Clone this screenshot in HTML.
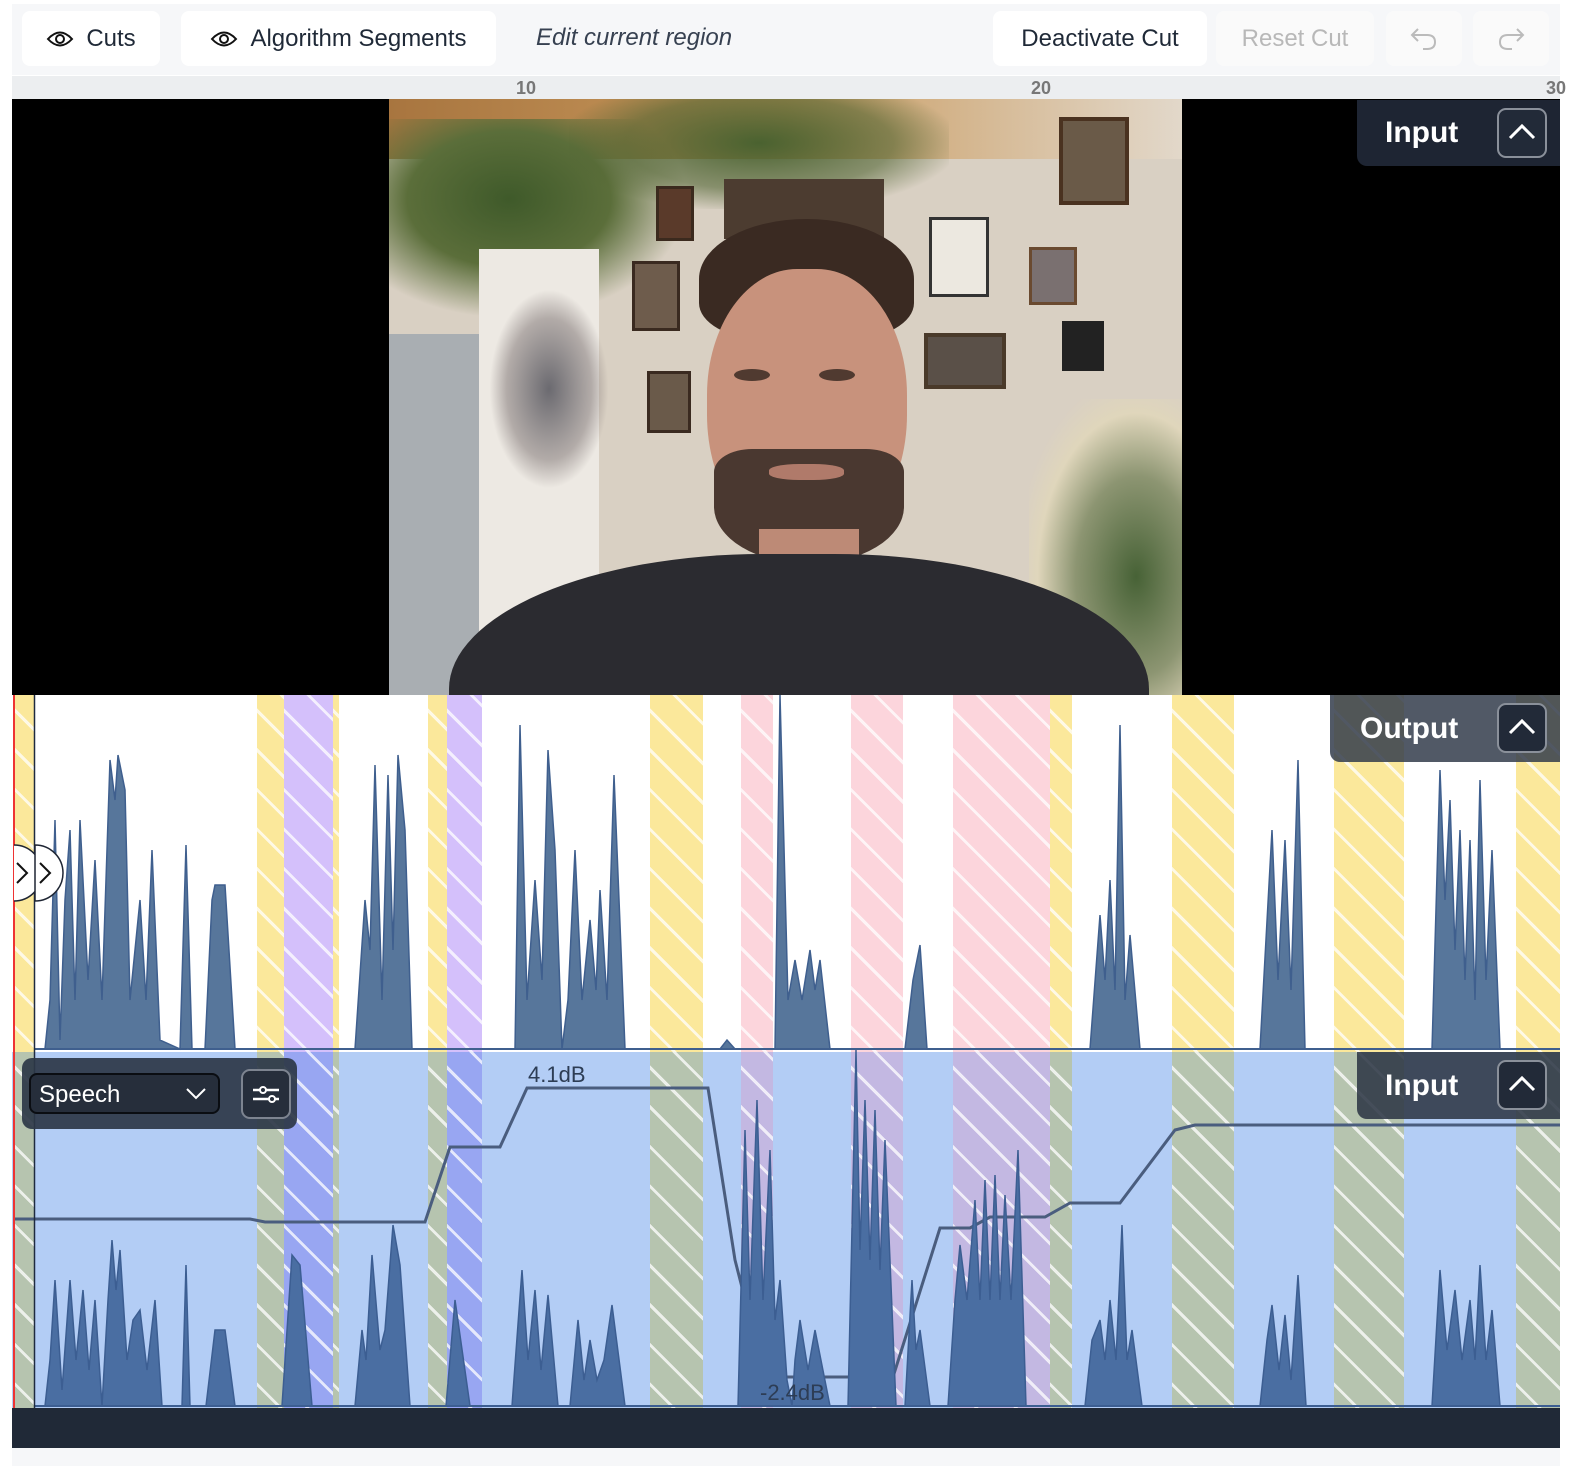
<!DOCTYPE html>
<html><head><meta charset="utf-8"><style>
*{margin:0;padding:0;box-sizing:border-box}
html{overflow:hidden;width:1580px;height:1466px}
body{width:1580px;height:1466px;background:#fff;position:relative;overflow:hidden;font-family:"Liberation Sans",sans-serif}
svg{display:block}
.abs{position:absolute}
.btn{position:absolute;top:11px;height:55px;background:#fff;border-radius:8px;font-size:24px;color:#1f2937;display:flex;align-items:center;justify-content:center;gap:12px}
.band{position:absolute;top:0;bottom:0}
.st{background-image:repeating-linear-gradient(45deg,rgba(255,255,255,0) 0 16px,rgba(255,255,255,.75) 16px 19px,rgba(255,255,255,0) 19px 28px)}
.lab{position:absolute;color:#fff;font-weight:bold;font-size:30px;display:flex;align-items:center}
.up{position:absolute;width:50px;height:50px;border:2px solid #8a909a;border-radius:9px;background:#222a38}
</style></head><body>
<div class="abs" style="left:12px;top:4px;width:1548px;height:71px;background:#f6f7f9"></div>
<div class="btn" style="left:22px;width:138px"><svg width="28" height="20" viewBox="0 0 28 20"><path d="M2 10 Q14 -3 26 10 Q14 23 2 10Z" fill="none" stroke="#111" stroke-width="2"/><circle cx="14" cy="10" r="4" fill="none" stroke="#111" stroke-width="2"/></svg>Cuts</div>
<div class="btn" style="left:181px;width:315px"><svg width="28" height="20" viewBox="0 0 28 20"><path d="M2 10 Q14 -3 26 10 Q14 23 2 10Z" fill="none" stroke="#111" stroke-width="2"/><circle cx="14" cy="10" r="4" fill="none" stroke="#111" stroke-width="2"/></svg>Algorithm Segments</div>
<div class="abs" style="left:536px;top:24px;font-size:24px;font-style:italic;color:#374151">Edit current region</div>
<div class="btn" style="left:993px;width:214px">Deactivate Cut</div>
<div class="btn" style="left:1216px;width:158px;background:#fafafa;color:#b8b8b8">Reset Cut</div>
<div class="btn" style="left:1386px;width:76px;background:#fafafa"><svg width="30" height="28" viewBox="0 0 30 28"><path d="M9 4 L3 10 L9 16 M3 10 H18 Q26 10 26 17 Q26 24 18 24 H14" fill="none" stroke="#bbb" stroke-width="2"/></svg></div>
<div class="btn" style="left:1473px;width:76px;background:#fafafa"><svg width="30" height="28" viewBox="0 0 30 28"><path d="M21 4 L27 10 L21 16 M27 10 H12 Q4 10 4 17 Q4 24 12 24 H16" fill="none" stroke="#bbb" stroke-width="2"/></svg></div>
<div class="abs" style="left:12px;top:76px;width:1548px;height:23px;background:#eceef0;font-size:18px;font-weight:bold;color:#777"><span class="abs" style="left:504px;top:2px">10</span><span class="abs" style="left:1019px;top:2px">20</span><span class="abs" style="left:1534px;top:2px">30</span></div>
<div class="abs" style="left:12px;top:99px;width:1548px;height:596px;background:#000"></div>
<div class="abs" style="left:389px;top:99px;width:793px;height:596px;overflow:hidden;background:#d9d0c3">
 <div class="abs" style="left:0;top:0;width:793px;height:60px;background:linear-gradient(90deg,#a8753f,#c99a5e 50%,#e2d8ca)"></div>
 <div class="abs" style="left:0;top:20px;width:300px;height:200px;background:radial-gradient(ellipse at 40% 40%,#3f5a2a 0,#5b6e3a 40%,rgba(90,110,60,0) 70%)"></div>
 <div class="abs" style="left:180px;top:0;width:380px;height:110px;background:radial-gradient(ellipse at 50% 40%,#4a6230 0,rgba(80,100,50,.6) 50%,rgba(0,0,0,0) 75%)"></div>
 <div class="abs" style="left:0;top:235px;width:90px;height:361px;background:#a9aeb2"></div>
 <div class="abs" style="left:90px;top:150px;width:120px;height:446px;background:#ede9e3"></div>
 <div class="abs" style="left:100px;top:190px;width:120px;height:200px;background:radial-gradient(ellipse,#6b6a70 0,rgba(120,110,110,.5) 50%,rgba(0,0,0,0) 70%)"></div>
 <div class="abs" style="left:267px;top:87px;width:38px;height:55px;background:#5a3a2a;border:3px solid #3b2a1e"></div>
 <div class="abs" style="left:243px;top:162px;width:48px;height:70px;background:#6e5c4c;border:3px solid #3a2a20"></div>
 <div class="abs" style="left:258px;top:272px;width:44px;height:62px;background:#6a5a4a;border:3px solid #3a2a20"></div>
 <div class="abs" style="left:335px;top:80px;width:160px;height:60px;background:#4c3c30"></div>
 <div class="abs" style="left:540px;top:118px;width:60px;height:80px;background:#ece8e0;border:3px solid #333"></div>
 <div class="abs" style="left:670px;top:18px;width:70px;height:88px;background:#6a5a48;border:4px solid #4a3220"></div>
 <div class="abs" style="left:640px;top:148px;width:48px;height:58px;background:#7a7070;border:3px solid #6a4a30"></div>
 <div class="abs" style="left:535px;top:234px;width:82px;height:56px;background:#5a5048;border:4px solid #4a3a2a"></div>
 <div class="abs" style="left:673px;top:222px;width:42px;height:50px;background:#222"></div>
 <div class="abs" style="left:640px;top:300px;width:153px;height:296px;background:radial-gradient(ellipse at 70% 60%,#476236 0,rgba(90,110,60,.6) 40%,rgba(230,220,180,.5) 65%,rgba(0,0,0,0) 80%)"></div>
 <div class="abs" style="left:310px;top:120px;width:215px;height:120px;border-radius:50% 50% 30% 30%;background:#3a2a22"></div>
 <div class="abs" style="left:318px;top:170px;width:200px;height:280px;border-radius:45% 45% 48% 48%;background:#c8927c"></div>
 <div class="abs" style="left:325px;top:350px;width:190px;height:115px;border-radius:20% 20% 50% 50%;background:#4a3830"></div>
 <div class="abs" style="left:380px;top:365px;width:75px;height:16px;border-radius:40%;background:#b07a6a"></div>
 <div class="abs" style="left:345px;top:270px;width:36px;height:12px;border-radius:50%;background:#503a30"></div>
 <div class="abs" style="left:430px;top:270px;width:36px;height:12px;border-radius:50%;background:#503a30"></div>
 <div class="abs" style="left:370px;top:430px;width:100px;height:60px;background:#bd8a76"></div>
 <div class="abs" style="left:60px;top:455px;width:700px;height:300px;border-radius:45% 45% 0 0;background:#2b2b30"></div>
</div>
<div class="lab" style="left:1357px;top:100px;width:203px;height:66px;background:#1e2533;border-radius:0 0 0 10px;padding-left:28px">Input</div>
<div class="up" style="left:1497px;top:108px"><svg width="46" height="46" viewBox="0 0 46 46"><path d="M11 28 L23 16 L35 28" fill="none" stroke="#fff" stroke-width="3"/></svg></div>

<div class="abs" style="left:12px;top:695px;width:1548px;height:357px;background:#fff;overflow:hidden">
 <div class="band st" style="left:3px;width:19px;background-color:#fbe89b"></div>
 <div class="band st" style="left:245px;width:27px;background-color:#fbe89b"></div>
 <div class="band st" style="left:272px;width:49px;background-color:#d4c0fb"></div>
 <div class="band st" style="left:321px;width:6px;background-color:#fbe89b"></div>
 <div class="band st" style="left:416px;width:19px;background-color:#fbe89b"></div>
 <div class="band st" style="left:435px;width:35px;background-color:#d4c0fb"></div>
 <div class="band st" style="left:638px;width:53px;background-color:#fbe89b"></div>
 <div class="band st" style="left:729px;width:32px;background-color:#fcd5dc"></div>
 <div class="band st" style="left:839px;width:52px;background-color:#fcd5dc"></div>
 <div class="band st" style="left:941px;width:97px;background-color:#fcd5dc"></div>
 <div class="band st" style="left:1038px;width:22px;background-color:#fbe89b"></div>
 <div class="band st" style="left:1160px;width:62px;background-color:#fbe89b"></div>
 <div class="band st" style="left:1322px;width:70px;background-color:#fbe89b"></div>
 <div class="band st" style="left:1504px;width:44px;background-color:#fbe89b"></div>
</div>
<svg class="abs" style="left:0;top:0" width="1580" height="1466">
 <polygon fill="#57769b" stroke="#3f5f8e" stroke-width="1.5" points="34,1049 45,1049 50,1000 55,820 60,1040 65,900 70,830 75,1000 80,820 88,980 95,860 102,1000 110,760 115,800 118,755 125,790 130,1000 140,900 146,1000 152,850 160,1040 180,1049 186,845 192,1049 205,1049 212,900 215,885 225,885 235,1049 355,1049 365,900 370,950 375,765 382,1000 388,775 393,950 398,755 405,830 412,1049 515,1049 520,725 527,1000 535,880 542,980 548,750 555,850 562,1049 568,1000 575,850 582,1000 590,920 596,990 600,890 607,1000 614,775 625,1049 720,1049 727,1040 735,1049 775,1049 780,695 788,1000 795,960 802,1000 810,950 815,990 820,960 830,1049 905,1049 913,980 920,945 927,1049 1090,1049 1100,915 1105,980 1110,880 1115,990 1120,725 1125,1000 1130,935 1140,1049 1260,1049 1272,830 1278,980 1285,840 1291,990 1298,760 1305,1049 1432,1049 1440,770 1445,900 1450,800 1455,950 1460,830 1465,980 1470,840 1475,1000 1480,780 1486,980 1492,850 1500,1049"/>
 <line x1="34" y1="1049" x2="1560" y2="1049" stroke="#3f5f8e" stroke-width="2"/>
</svg>
<div class="lab" style="left:1330px;top:695px;width:230px;height:67px;background:rgba(50,60,75,.85);border-radius:0 0 0 10px;padding-left:30px">Output</div>
<div class="up" style="left:1497px;top:703px"><svg width="46" height="46" viewBox="0 0 46 46"><path d="M11 28 L23 16 L35 28" fill="none" stroke="#fff" stroke-width="3"/></svg></div>

<div class="abs" style="left:12px;top:1052px;width:1548px;height:357px;background:#b3cdf5;overflow:hidden">
 <div class="band st" style="left:3px;width:19px;background-color:#b6c4af"></div>
 <div class="band st" style="left:245px;width:27px;background-color:#b6c4af"></div>
 <div class="band st" style="left:272px;width:49px;background-color:#98a6f2"></div>
 <div class="band st" style="left:321px;width:6px;background-color:#b6c4af"></div>
 <div class="band st" style="left:416px;width:19px;background-color:#b6c4af"></div>
 <div class="band st" style="left:435px;width:35px;background-color:#98a6f2"></div>
 <div class="band st" style="left:638px;width:53px;background-color:#b6c4af"></div>
 <div class="band st" style="left:729px;width:32px;background-color:#c3b8e2"></div>
 <div class="band st" style="left:839px;width:52px;background-color:#c3b8e2"></div>
 <div class="band st" style="left:941px;width:97px;background-color:#c3b8e2"></div>
 <div class="band st" style="left:1038px;width:22px;background-color:#b6c4af"></div>
 <div class="band st" style="left:1160px;width:62px;background-color:#b6c4af"></div>
 <div class="band st" style="left:1322px;width:70px;background-color:#b6c4af"></div>
 <div class="band st" style="left:1504px;width:44px;background-color:#b6c4af"></div>
</div>
<svg class="abs" style="left:0;top:0" width="1580" height="1466">
 <polyline fill="none" stroke="#4a5d7e" stroke-width="3" points="15,1219 250,1219 265,1222 425,1222 450,1147 500,1147 527,1088 708,1088 735,1260 765,1377 893,1377 940,1228 970,1228 990,1217 1045,1217 1070,1203 1120,1203 1175,1130 1195,1125 1560,1125"/>
 <polygon fill="#4a6ea2" stroke="#3c5e92" stroke-width="1.5" points="45,1406 50,1360 55,1280 62,1390 70,1280 76,1360 83,1290 89,1370 95,1300 102,1406 108,1300 112,1240 116,1290 120,1250 127,1360 133,1320 140,1310 147,1370 155,1300 162,1406 182,1406 186,1265 190,1406 206,1406 215,1330 225,1330 235,1406 282,1406 292,1255 300,1265 312,1406 355,1406 362,1330 366,1360 372,1255 380,1350 385,1330 393,1225 400,1265 410,1406 446,1406 455,1300 470,1406 512,1406 522,1270 528,1360 535,1290 541,1370 548,1295 558,1406 570,1406 578,1320 584,1380 590,1340 597,1380 604,1360 612,1305 625,1406 738,1406 745,1130 750,1300 757,1100 763,1300 770,1150 775,1320 780,1280 787,1380 792,1406 795,1360 800,1320 808,1370 815,1330 830,1406 848,1406 856,1050 860,1250 865,1100 870,1260 875,1110 880,1270 885,1140 896,1406 905,1406 912,1280 916,1350 920,1330 930,1406 948,1406 955,1300 960,1245 967,1300 975,1200 980,1300 985,1180 990,1300 995,1175 1000,1300 1005,1195 1011,1300 1018,1150 1026,1406 1085,1406 1092,1340 1100,1320 1105,1360 1110,1300 1116,1360 1122,1225 1127,1360 1132,1330 1142,1406 1260,1406 1267,1340 1272,1305 1279,1370 1285,1315 1291,1380 1298,1275 1306,1406 1432,1406 1440,1270 1447,1350 1455,1290 1462,1360 1470,1300 1475,1360 1480,1265 1486,1360 1492,1310 1500,1406"/>
 <line x1="34" y1="1406" x2="1560" y2="1406" stroke="#3c5e92" stroke-width="2"/>
 <text x="528" y="1082" font-family="Liberation Sans" font-size="22" fill="#2d3d55">4.1dB</text>
 <text x="760" y="1400" font-family="Liberation Sans" font-size="22" fill="#2d3d55">-2.4dB</text>
 <line x1="14" y1="695" x2="14" y2="1408" stroke="#e33" stroke-width="2"/>
 <line x1="34.5" y1="695" x2="34.5" y2="1408" stroke="#1e2a40" stroke-width="1.5"/>
 <path d="M14 845 A28 28 0 0 1 14 901" fill="#fff" stroke="#1e2533" stroke-width="1.5"/>
 <path d="M35 845 A28 28 0 0 1 35 901 Z" fill="#fff" stroke="#1e2533" stroke-width="1.5"/>
 <path d="M17 863 L27 873 L17 883" fill="none" stroke="#111" stroke-width="2"/>
 <path d="M40 863 L50 873 L40 883" fill="none" stroke="#111" stroke-width="2"/>
</svg>
<div class="lab" style="left:1357px;top:1052px;width:203px;height:67px;background:rgba(45,55,70,.88);border-radius:0 0 0 10px;padding-left:28px">Input</div>
<div class="up" style="left:1497px;top:1060px"><svg width="46" height="46" viewBox="0 0 46 46"><path d="M11 28 L23 16 L35 28" fill="none" stroke="#fff" stroke-width="3"/></svg></div>
<div class="abs" style="left:22px;top:1058px;width:275px;height:71px;background:rgba(45,55,70,.92);border-radius:10px"></div>
<div class="abs" style="left:29px;top:1073px;width:191px;height:41px;background:#262e3b;border:2px solid #0a0d12;border-radius:8px;color:#fff;font-size:24px;padding:6px 0 0 8px">Speech
 <svg class="abs" style="left:154px;top:12px" width="22" height="14" viewBox="0 0 22 14"><path d="M2 2 L11 11 L20 2" fill="none" stroke="#fff" stroke-width="2"/></svg></div>
<div class="abs" style="left:241px;top:1069px;width:50px;height:50px;border:2px solid #7d8490;border-radius:9px;background:#262e3b">
 <svg width="46" height="46" viewBox="0 0 46 46"><path d="M10 19 H36 M10 28 H36" stroke="#fff" stroke-width="2.5"/><circle cx="20" cy="19" r="3" fill="#262e3b" stroke="#fff" stroke-width="2"/><circle cx="29" cy="28" r="3" fill="#262e3b" stroke="#fff" stroke-width="2"/></svg></div>
<div class="abs" style="left:12px;top:1408px;width:1548px;height:40px;background:#202937"></div>
<div class="abs" style="left:12px;top:1448px;width:1548px;height:18px;background:#f6f7f9"></div>
</body></html>
